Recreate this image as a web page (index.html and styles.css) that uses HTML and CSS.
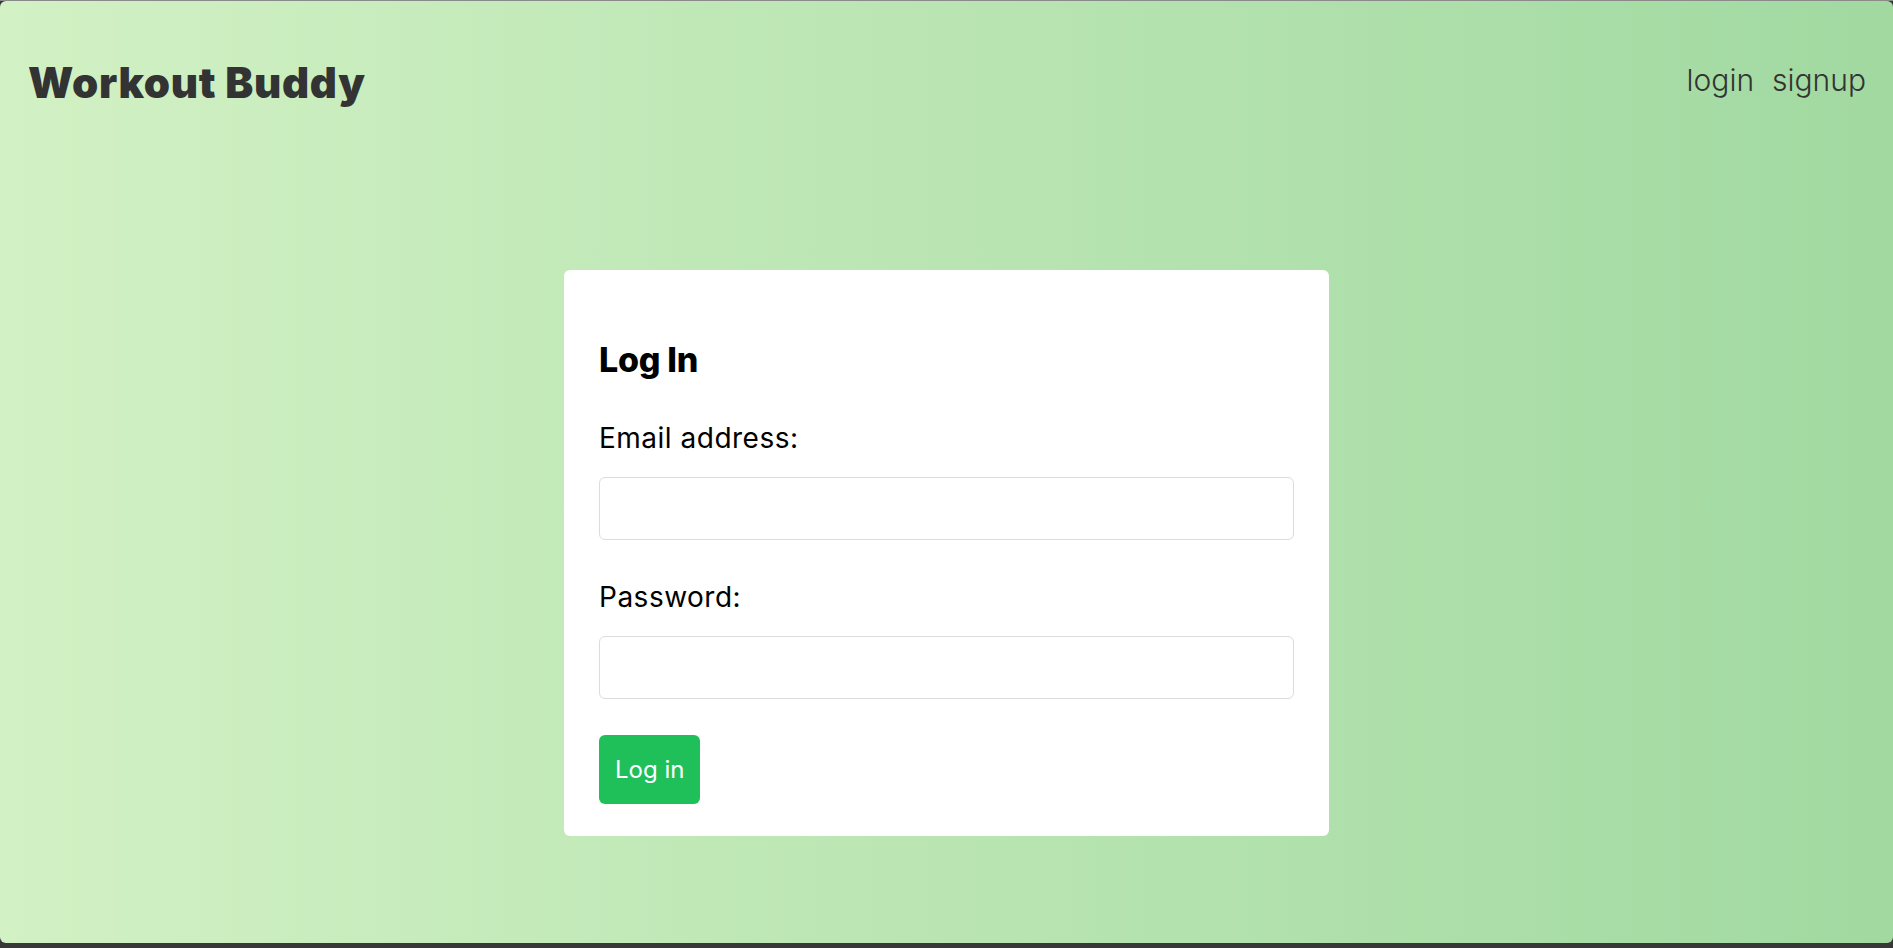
FILE: index.html
```html
<!DOCTYPE html>
<html lang="en">
<head>
<meta charset="utf-8">
<title>Workout Buddy</title>
<link rel="stylesheet" href="styles.css">
</head>
<body>
<div class="app">
  <header class="header">
    <a class="brand" href="#">Workout Buddy</a>
    <nav class="nav">
      <a href="#">login</a>
      <a href="#">signup</a>
    </nav>
  </header>
  <main class="main">
    <form class="card">
      <h3 class="card-title">Log In</h3>
      <label class="label">Email address:</label>
      <input class="input" type="email">
      <label class="label">Password:</label>
      <input class="input" type="password">
      <button class="btn" type="button">Log in</button>
    </form>
  </main>
</div>
</body>
</html>
```
FILE: styles.css
```css
* { box-sizing: border-box; }
html, body { margin: 0; padding: 0; }
body {
  background: linear-gradient(#8a8a8a 0 1px, #383838 1px);
  font-family: Inter, "Open Sans", sans-serif;
  height: 948px;
  overflow: hidden;
}
.app {
  margin-top: 1px;
  height: 942px;
  border-radius: 6px;
  background: linear-gradient(to right, #d2f1c4, #a1d9a1);
}
.header {
  display: flex;
  align-items: center;
  justify-content: space-between;
  padding: 61px 27px 0 28px;
}
.brand {
  font-size: 42px;
  line-height: 42px;
  font-weight: 900;
  color: #333;
  text-decoration: none;
  letter-spacing: 0.7px;
}
.nav {
  display: flex;
  gap: 18px;
  padding-bottom: 6px;
}
.nav a {
  font-size: 30px;
  line-height: 30px;
  font-weight: 300;
  color: #333;
  text-decoration: none;
}
.main {
  padding-top: 166px;
}
.card {
  width: 765px;
  margin: 0 auto;
  background: #fff;
  border-radius: 6px;
  padding: 73px 35px 32px 35px;
  display: flex;
  flex-direction: column;
  align-items: flex-start;
}
.card-title {
  margin: 0 0 47px;
  font-size: 34px;
  line-height: 34px;
  font-weight: 800;
  color: #000;
  letter-spacing: -0.3px;
}
.label {
  font-size: 28px;
  line-height: 28px;
  font-weight: 400;
  color: #000;
  letter-spacing: 0.5px;
  margin-bottom: 25px;
}
.input {
  width: 100%;
  height: 63px;
  border: 1px solid #dcdcdc;
  border-radius: 6px;
  background: #fff;
  margin: 0 0 43px;
}
.input + .label + .input { margin-bottom: 36px; }
.btn {
  height: 69px;
  padding: 0 16px;
  border: 0;
  border-radius: 6px;
  background: #1fc05a;
  color: #fff;
  font-family: inherit;
  font-size: 24px;
  font-weight: 400;
  letter-spacing: 0;
}
```
